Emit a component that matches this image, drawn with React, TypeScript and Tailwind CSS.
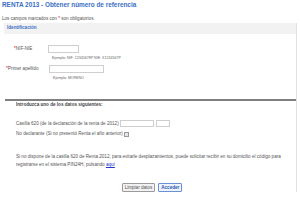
import React from 'react'

const font = { fontFamily: '"Liberation Sans", Arial, sans-serif' }

export default function App() {
  return (
    <div className="w-[300px] h-[200px] overflow-hidden bg-white text-[#333] font-['Liberation_Sans',Arial,sans-serif]" style={font}>
      <div className="pl-[2px] pt-[1px] text-[6.4px] leading-[8px] font-bold text-[#3a6fc4]">
        RENTA 2013 - Obtener número de referencia
      </div>
      <div className="pl-[2px] mt-[7px] text-[4.6px] leading-[6px] text-[#555]">
        Los campos marcados con <span className="text-red-600">*</span> son obligatorios.
      </div>

      <div className="ml-[4px] mr-[3px] mt-[1px] border-r border-[#e2e2e2]">
        <div className="h-[11px] bg-[#f2f2f2] pl-[3px] pt-[2px] text-[4.6px] leading-[6px] font-bold text-[#3a6fc4]">
          Identificación
        </div>

        <div className="pt-[11px] h-[65px] text-[4.6px] leading-[6px]">
          <div className="flex items-start">
            <span className="w-[44px] pl-[10px] pt-[1px] text-[#555]">
              <span className="text-red-600">*</span>NIF-NIE
            </span>
            <span className="w-[31px] h-[8px] border border-[#cfcfcf] bg-white" />
          </div>
          <div className="pl-[48px] mt-[3px] text-[3.6px] leading-[5px] text-[#666]">
            Ejemplo: NIF: 12345678P NIE: X1234567P
          </div>
          <div className="flex items-start mt-[4px]">
            <span className="w-[45px] pl-[2px] pt-[1px] text-[#555]">
              <span className="text-red-600">*</span>Primer apellido
            </span>
            <span className="w-[55px] h-[8px] border border-[#cfcfcf] bg-white" />
          </div>
          <div className="pl-[49px] mt-[3px] text-[3.6px] leading-[5px] text-[#666]">
            Ejemplo: MORENO
          </div>
        </div>

        <div className="ml-[1px] h-[2px] bg-[#7f7f7f]" />

        <div className="text-[4.6px] leading-[6px] text-[#555]">
          <div className="pl-[12px] pt-[1px] font-bold text-[#444]">Introduzca uno de los datos siguientes:</div>
          <div className="flex items-center mt-[12px] pl-[12px]">
            <span>Casilla 620 (de la declaración de la renta de 2012)</span>
            <span className="ml-[1px] w-[34px] h-[7px] border border-[#cfcfcf]" />
            <span className="text-[3px] leading-[3px] self-end mx-[0.5px]">.</span>
            <span className="w-[14px] h-[7px] border border-[#cfcfcf]" />
          </div>
          <div className="flex items-center mt-[4px] pl-[12px]">
            <span>No declarante (Si no presentó Renta el año anterior)</span>
            <span className="ml-[1px] w-[5px] h-[5px] border border-[#9a9a9a] bg-[#e6e6e6]" />
          </div>
          <div className="pl-[12px] mt-[16px] leading-[8px]">
            <div>Si no dispone de la casilla 620 de Renta 2012, para evitarle desplazamientos, puede solicitar recibir en su domicilio el código para</div>
            <div>
              registrarse en el sistema PIN24H, pulsando <span className="text-[#2233cc] underline">aquí</span>
            </div>
          </div>
          <div className="flex justify-center gap-[3px] mt-[14px] pl-[4px]">
            <span className="h-[9px] px-[2px] border border-[#9a9a9a] rounded-[1px] bg-[#f2f2f2] leading-[8px]">Limpiar datos</span>
            <span className="h-[9px] px-[2px] border border-[#6d8fd6] rounded-[1px] bg-[#eef3fc] leading-[8px] font-bold text-[#2a56b4]">Acceder</span>
          </div>
        </div>
      </div>
    </div>
  )
}
